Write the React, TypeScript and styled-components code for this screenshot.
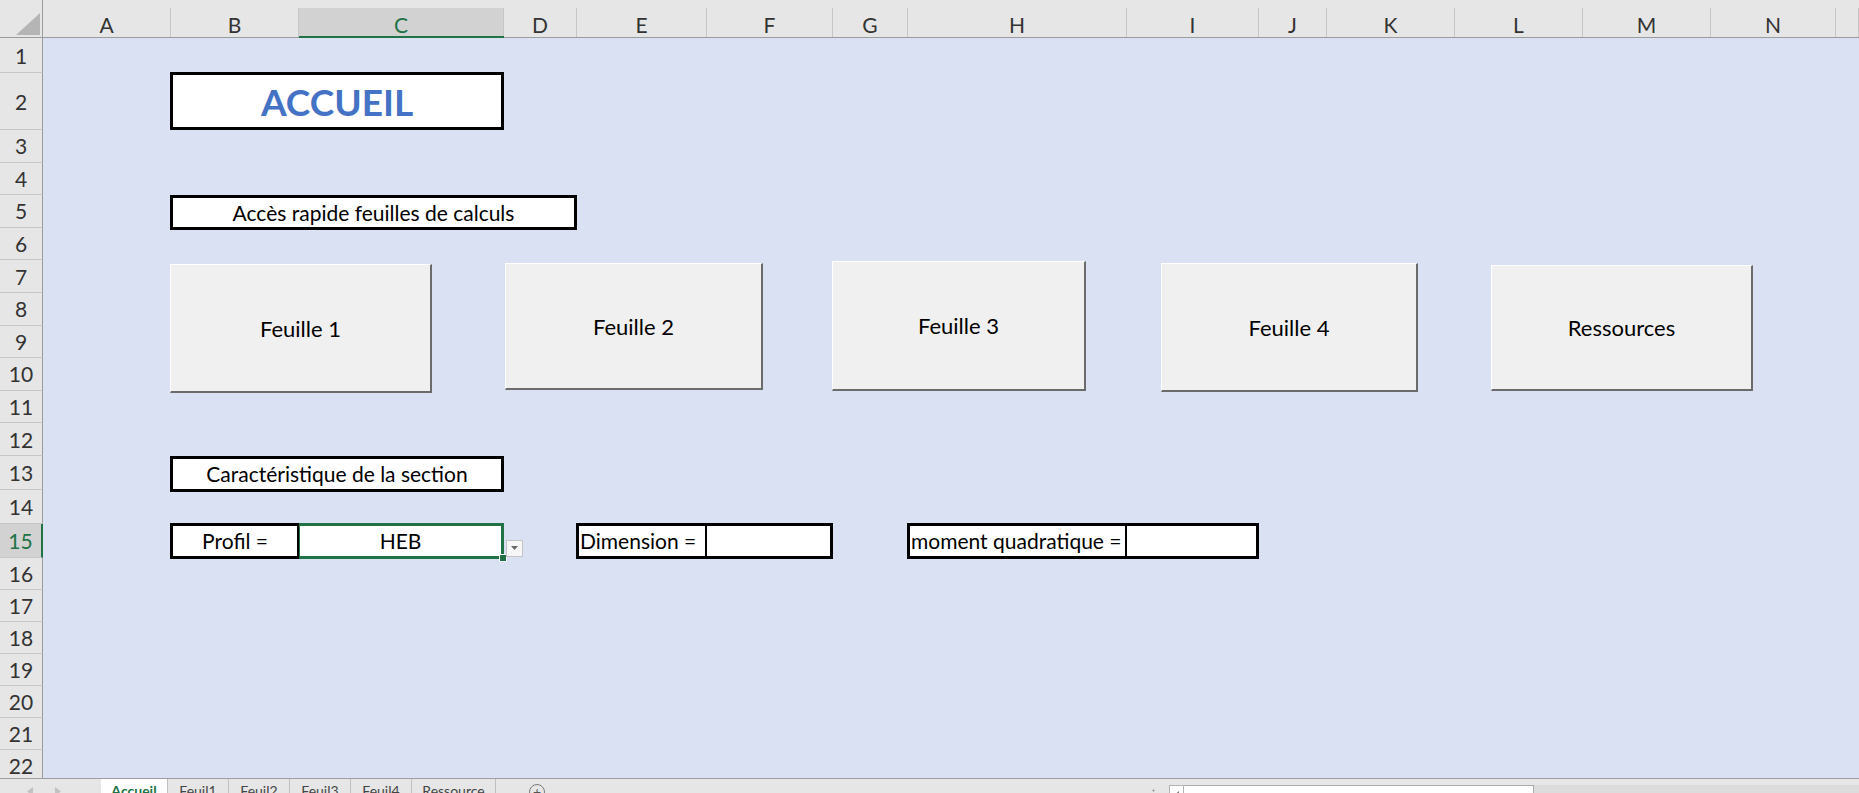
import styled, { createGlobalStyle } from "styled-components";

const GREEN = "#217346";
const HEADER_BG = "#e6e6e6";

const COLUMNS = [
  { name: "A", width: 128 },
  { name: "B", width: 128 },
  { name: "C", width: 205 },
  { name: "D", width: 73 },
  { name: "E", width: 130 },
  { name: "F", width: 126 },
  { name: "G", width: 75 },
  { name: "H", width: 219 },
  { name: "I", width: 132 },
  { name: "J", width: 68 },
  { name: "K", width: 128 },
  { name: "L", width: 128 },
  { name: "M", width: 128 },
  { name: "N", width: 125 },
];

const ROW_HEIGHTS = [
  35,
  57,
  ...Array(10).fill(32.6),
  34,
  34,
  34,
  ...Array(7).fill(32),
];

const SELECTED_COL = "C";
const SELECTED_ROW = 15;

const BUTTONS = [
  { label: "Feuille 1", width: 262, height: 129, gap: -1, top: 4 },
  { label: "Feuille 2", width: 258, height: 127, gap: 73, top: 3 },
  { label: "Feuille 3", width: 254, height: 130, gap: 69, top: 1 },
  { label: "Feuille 4", width: 257, height: 129, gap: 75, top: 3 },
  { label: "Ressources", width: 262, height: 126, gap: 73, top: 5 },
];

const TABS = [
  { name: "Accueil", width: 67, active: true },
  { name: "Feuil1", width: 61 },
  { name: "Feuil2", width: 61 },
  { name: "Feuil3", width: 61 },
  { name: "Feuil4", width: 61 },
  { name: "Ressource", width: 84 },
];

const GlobalStyle = createGlobalStyle`
  html, body {
    margin: 0;
    padding: 0;
    background: #ffffff;
  }
  body {
    font-family: Lato, "Liberation Sans", sans-serif;
  }
`;

const Window = styled.div`
  width: 1859px;
  height: 793px;
  overflow: hidden;
  display: flex;
  flex-direction: column;
  background: ${HEADER_BG};
`;

const Sheet = styled.div`
  flex: none;
  height: 778px;
  overflow: hidden;
  display: grid;
  grid-template-columns: 43px ${COLUMNS.map((c) => c.width + "px").join(" ")} 1fr;
  grid-template-rows: 38px ${ROW_HEIGHTS.map((h) => h + "px").join(" ")};
  background: #d9e1f2;
  color: #000;
`;

const Corner = styled.div`
  grid-row: 1;
  grid-column: 1;
  background: ${HEADER_BG};
  border-right: 1px solid #9b9b9b;
  border-bottom: 1px solid #9b9b9b;
  display: flex;
  align-items: flex-end;
  justify-content: flex-end;
  padding: 0 2px 2px 0;
`;

const ColHeader = styled.div<{ $selected?: boolean }>`
  grid-row: 1;
  padding-top: 8px;
  background: ${HEADER_BG};
  border-bottom: ${({ $selected }) =>
    $selected ? `2px solid ${GREEN}` : "1px solid #9b9b9b"};
`;

const ColLabel = styled.div<{ $selected?: boolean }>`
  height: 100%;
  display: flex;
  align-items: center;
  justify-content: center;
  padding-top: 4px;
  box-sizing: border-box;
  border-right: 1px solid #c6c6c6;
  background: ${({ $selected }) => ($selected ? "#d2d2d2" : "transparent")};
  color: ${({ $selected }) => ($selected ? GREEN : "#333")};
  font-size: 21px;
`;

const RowHeader = styled.div<{ $row: number; $selected?: boolean }>`
  grid-column: 1;
  grid-row: ${({ $row }) => $row};
  display: flex;
  align-items: center;
  justify-content: center;
  background: ${({ $selected }) => ($selected ? "#d2d2d2" : HEADER_BG)};
  border-right: ${({ $selected }) =>
    $selected ? `2px solid ${GREEN}` : "1px solid #9b9b9b"};
  border-bottom: 1px solid #c6c6c6;
  color: ${({ $selected }) => ($selected ? GREEN : "#333")};
  font-size: 21px;
`;

const TitleBox = styled.div`
  grid-column: 3 / 5;
  grid-row: 3;
  margin: -1px 0 0 -1px;
  background: #fff;
  border: 3px solid #000;
  display: flex;
  align-items: center;
  justify-content: center;
  color: #4472c4;
  font-weight: 700;
  font-size: 37px;
`;

const CaptionBox = styled.div<{ $col: string; $row: number }>`
  grid-column: ${({ $col }) => $col};
  grid-row: ${({ $row }) => $row};
  margin: 0 0 -2px -1px;
  background: #fff;
  border: 3px solid #000;
  display: flex;
  align-items: center;
  justify-content: center;
  font-size: 21px;
`;

const ButtonStrip = styled.div`
  grid-column: 3 / -1;
  grid-row: 8 / 12;
  display: flex;
  align-items: flex-start;
`;

const SheetButton = styled.button<{
  $width: number;
  $height: number;
  $gap: number;
  $top: number;
}>`
  flex: none;
  width: ${({ $width }) => $width}px;
  height: ${({ $height }) => $height}px;
  margin-left: ${({ $gap }) => $gap}px;
  margin-top: ${({ $top }) => $top}px;
  padding: 0;
  box-sizing: border-box;
  background: #f0f0f0;
  border-top: 1px solid #ffffff;
  border-left: 1px solid #ffffff;
  border-right: 2px solid #6b6b6b;
  border-bottom: 2px solid #6b6b6b;
  font-family: inherit;
  font-size: 22px;
  color: #000;
  cursor: pointer;
`;

const FieldLabel = styled.div<{ $col: number; $align: "left" | "center" }>`
  grid-column: ${({ $col }) => $col};
  grid-row: 16;
  margin: -1px 0 -1px -1px;
  background: #fff;
  border: 3px solid #000;
  border-right-width: 2px;
  display: flex;
  align-items: center;
  justify-content: ${({ $align }) => ($align === "left" ? "flex-start" : "center")};
  padding-left: ${({ $align }) => ($align === "left" ? "1px" : "0")};
  font-size: 21px;
  white-space: nowrap;
`;

const FieldValue = styled.div<{ $col: number; $active?: boolean }>`
  grid-column: ${({ $col }) => $col};
  grid-row: 16;
  position: relative;
  margin: -1px 0 -1px 0;
  background: #fff;
  border: 3px solid ${({ $active }) => ($active ? GREEN : "#000")};
  border-left: ${({ $active }) => ($active ? `1px solid ${GREEN}` : "none")};
  display: flex;
  align-items: center;
  justify-content: center;
  font-size: 21px;
`;

const FillHandle = styled.span`
  position: absolute;
  right: -6px;
  bottom: -6px;
  width: 8px;
  height: 8px;
  box-sizing: border-box;
  background: ${GREEN};
  border: 1px solid #fff;
`;

const DropButton = styled.span`
  position: absolute;
  left: 100%;
  top: 14px;
  margin-left: 5px;
  width: 17px;
  height: 17px;
  box-sizing: border-box;
  background: #f7f7f7;
  border: 1px solid #c4c4c4;
  display: flex;
  align-items: center;
  justify-content: center;
`;

const TabBar = styled.div`
  flex: none;
  height: 30px;
  display: flex;
  align-items: stretch;
  border-top: 1px solid #9e9e9e;
  background: ${HEADER_BG};
`;

const TabNav = styled.div`
  width: 101px;
  flex: none;
  display: flex;
  align-items: flex-start;
  padding: 8px 0 0 27px;
  box-sizing: border-box;
  gap: 22px;
`;

const Tab = styled.div<{ $width: number; $active?: boolean }>`
  flex: none;
  width: ${({ $width }) => $width}px;
  box-sizing: border-box;
  padding-top: 4px;
  text-align: center;
  font-size: 14px;
  line-height: 16px;
  border-right: 1px solid #c0c0c0;
  background: ${({ $active }) => ($active ? "#ffffff" : "transparent")};
  color: ${({ $active }) => ($active ? GREEN : "#444")};
  font-weight: ${({ $active }) => ($active ? 700 : 400)};
`;

const AddSheet = styled.div`
  flex: none;
  margin: 5px 0 0 33px;
  width: 16px;
  height: 16px;
  box-sizing: border-box;
  border: 1px solid #7a7a7a;
  border-radius: 50%;
  display: flex;
  align-items: center;
  justify-content: center;
  color: #555;
  font-size: 14px;
  line-height: 1;
`;

const Splitter = styled.div`
  flex: none;
  margin: 6px 0 0 607px;
  width: 3px;
`;

const ScrollTrack = styled.div`
  flex: 1;
  margin: 6px 0 0 14px;
  display: flex;
  align-items: flex-start;
  background: #dcdcdc;
`;

const ScrollArrow = styled.div`
  flex: none;
  width: 15px;
  height: 20px;
  box-sizing: border-box;
  background: #fff;
  border: 1px solid #b4b4b4;
  display: flex;
  justify-content: center;
  padding-top: 5px;
`;

const ScrollThumb = styled.div`
  flex: none;
  width: 350px;
  height: 20px;
  box-sizing: border-box;
  background: #fff;
  border: 1px solid #ababab;
  border-left: none;
`;

const CornerTriangle = () => (
  <svg width="24" height="22" viewBox="0 0 24 22">
    <polygon points="24,0 24,22 0,22" fill="#b5b5b5" />
  </svg>
);

const NavArrow = ({ dir }: { dir: "left" | "right" }) => (
  <svg width="6" height="9" viewBox="0 0 6 9">
    <polygon
      points={dir === "left" ? "6,0 6,9 0,4.5" : "0,0 0,9 6,4.5"}
      fill="#c2c2c2"
    />
  </svg>
);

export default function App() {
  return (
    <Window>
      <GlobalStyle />
      <Sheet>
        <Corner>
          <CornerTriangle />
        </Corner>
        {COLUMNS.map((c) => (
          <ColHeader key={c.name} $selected={c.name === SELECTED_COL}>
            <ColLabel $selected={c.name === SELECTED_COL}>{c.name}</ColLabel>
          </ColHeader>
        ))}
        <ColHeader>
          <ColLabel />
        </ColHeader>
        {ROW_HEIGHTS.map((_, i) => (
          <RowHeader key={i} $row={i + 2} $selected={i + 1 === SELECTED_ROW}>
            {i + 1}
          </RowHeader>
        ))}

        <TitleBox>ACCUEIL</TitleBox>
        <CaptionBox $col="3 / 6" $row={6}>
          Accès rapide feuilles de calculs
        </CaptionBox>

        <ButtonStrip>
          {BUTTONS.map((b) => (
            <SheetButton
              key={b.label}
              $width={b.width}
              $height={b.height}
              $gap={b.gap}
              $top={b.top}
            >
              {b.label}
            </SheetButton>
          ))}
        </ButtonStrip>

        <CaptionBox $col="3 / 5" $row={14}>
          Caractéristique de la section
        </CaptionBox>

        <FieldLabel $col={3} $align="center">
          Profil =
        </FieldLabel>
        <FieldValue $col={4} $active>
          HEB
          <FillHandle />
          <DropButton>
            <svg width="7" height="4" viewBox="0 0 7 4">
              <polygon points="0,0 7,0 3.5,4" fill="#6a6a6a" />
            </svg>
          </DropButton>
        </FieldValue>

        <FieldLabel $col={6} $align="left">
          Dimension =
        </FieldLabel>
        <FieldValue $col={7} />

        <FieldLabel $col={9} $align="left">
          moment quadratique =
        </FieldLabel>
        <FieldValue $col={10} />
      </Sheet>

      <TabBar>
        <TabNav>
          <NavArrow dir="left" />
          <NavArrow dir="right" />
        </TabNav>
        {TABS.map((t) => (
          <Tab key={t.name} $width={t.width} $active={t.active}>
            {t.name}
          </Tab>
        ))}
        <AddSheet>+</AddSheet>
        <Splitter>
          <svg width="3" height="12" viewBox="0 0 3 12">
            <circle cx="1.5" cy="1.5" r="1" fill="#8a8a8a" />
            <circle cx="1.5" cy="6" r="1" fill="#8a8a8a" />
            <circle cx="1.5" cy="10.5" r="1" fill="#8a8a8a" />
          </svg>
        </Splitter>
        <ScrollTrack>
          <ScrollArrow>
            <svg width="4" height="7" viewBox="0 0 4 7">
              <polygon points="4,0 4,7 0,3.5" fill="#777" />
            </svg>
          </ScrollArrow>
          <ScrollThumb />
        </ScrollTrack>
      </TabBar>
    </Window>
  );
}
